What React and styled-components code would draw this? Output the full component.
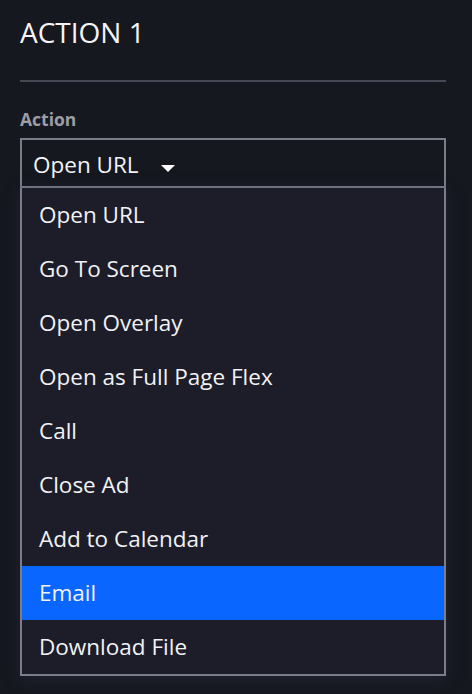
import React, { useState } from 'react';
import styled, { createGlobalStyle } from 'styled-components';

const actions = [
  'Open URL',
  'Go To Screen',
  'Open Overlay',
  'Open as Full Page Flex',
  'Call',
  'Close Ad',
  'Add to Calendar',
  'Email',
  'Download File',
];

const App = () => {
  const [value] = useState('Open URL');
  const [hovered, setHovered] = useState('Email');

  return (
    <>
      <GlobalStyle />
      <Panel>
        <Title>ACTION 1</Title>
        <Divider />
        <Label>Action</Label>
        <SelectWrap>
          <Select>
            <SelectValue>{value}</SelectValue>
            <Caret viewBox="0 0 14 7">
              <path d="M0 0 L14 0 L7 7 Z" fill="#ffffff" />
            </Caret>
          </Select>
          <Menu>
            {actions.map((a) => (
              <MenuItem
                key={a}
                active={a === hovered}
                onMouseEnter={() => setHovered(a)}
              >
                {a}
              </MenuItem>
            ))}
          </Menu>
        </SelectWrap>
      </Panel>
    </>
  );
};

const GlobalStyle = createGlobalStyle`
  html, body {
    margin: 0;
    padding: 0;
    background: #161820;
    height: 100%;
  }
  body {
    font-family: 'Open Sans', 'Noto Sans', sans-serif;
    color: #f2f2f5;
  }
`;

const Panel = styled.div`
  width: 426px;
  padding: 14px 0 0 20px;
  min-height: 680px;
  box-sizing: content-box;
`;

const Title = styled.h1`
  margin: 0;
  font-size: 28px;
  font-weight: 400;
  line-height: 36px;
  color: #f4f4f7;
`;

const Divider = styled.div`
  height: 2px;
  margin-top: 30px;
  background: #464853;
`;

const Label = styled.div`
  margin-top: 25px;
  font-size: 17.5px;
  font-weight: 700;
  line-height: 24px;
  color: #9d9ea5;
`;

const SelectWrap = styled.div`
  position: relative;
  margin-top: 7px;
`;

const Select = styled.div`
  display: flex;
  align-items: center;
  gap: 22px;
  height: 46px;
  padding-left: 11px;
  border: 2px solid #7b7d89;
  background: #161820;
`;

const SelectValue = styled.span`
  margin-top: 3px;
  font-size: 22.5px;
  line-height: 30px;
  color: #f4f4f7;
`;

const Caret = styled.svg`
  width: 14px;
  height: 7px;
  margin-top: 10px;
`;

const Menu = styled.div`
  position: absolute;
  top: 100%;
  left: 0;
  right: 0;
  border: 2px solid #7b7d89;
  border-top: none;
  background: #1c1d29;
  box-shadow: 0 4px 14px rgba(40, 43, 58, 0.55);
`;

const MenuItem = styled.div`
  height: 54px;
  line-height: 54px;
  padding-left: 17px;
  font-size: 22.5px;
  color: #f2f2f5;
  background: ${({ active }) => (active ? '#0966ff' : 'transparent')};
  cursor: pointer;
  white-space: nowrap;
`;

export default App;
